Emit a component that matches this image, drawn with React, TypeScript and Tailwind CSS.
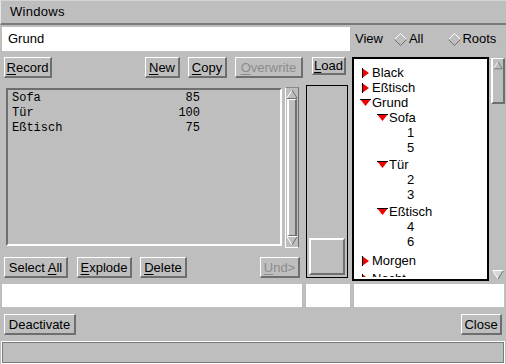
import React from 'react';

type BtnProps = {
  w: string;
  h?: string;
  disabled?: boolean;
  children: React.ReactNode;
};

function Btn({ w, h = 'h-[21px]', disabled, children }: BtnProps) {
  return (
    <div
      className={`${w} ${h} shrink-0 flex items-center justify-center border-t border-l border-white border-r-2 border-b-2 border-r-[#6e6e6e] border-b-[#6e6e6e] text-[13px] leading-none whitespace-pre ${
        disabled ? 'text-[#8c8c8c]' : 'text-black'
      }`}
    >
      <span>{children}</span>
    </div>
  );
}

function U({ children }: { children: React.ReactNode }) {
  return <span className="underline underline-offset-2">{children}</span>;
}

function Diamond() {
  return (
    <svg width="13" height="13" viewBox="0 0 13 13" className="shrink-0">
      <polyline points="0.5,6.5 6.5,0.5 12.5,6.5" fill="none" stroke="#ffffff" strokeWidth="1" />
      <polyline points="0.5,6.5 6.5,12.5 12.5,6.5" fill="none" stroke="#6e6e6e" strokeWidth="1" />
    </svg>
  );
}

function TriRight() {
  return (
    <svg width="7" height="10" viewBox="0 0 7 10">
      <polygon points="0,0 7,5 0,10" fill="#f00000" />
      <line x1="0.5" y1="0" x2="0.5" y2="10" stroke="#000" />
    </svg>
  );
}

function TriDown() {
  return (
    <svg width="11" height="7" viewBox="0 0 11 7">
      <polygon points="0,0 11,0 5.5,7" fill="#f00000" />
      <line x1="0" y1="0.5" x2="11" y2="0.5" stroke="#000" />
    </svg>
  );
}

function ArrowUp() {
  return (
    <svg width="12" height="10" viewBox="0 0 12 10">
      <polygon points="6,1 11,9 1,9" fill="#bebebe" />
      <line x1="6" y1="1" x2="1" y2="9" stroke="#ffffff" />
      <line x1="6" y1="1" x2="11" y2="9" stroke="#6e6e6e" />
      <line x1="1" y1="9.5" x2="11" y2="9.5" stroke="#6e6e6e" />
    </svg>
  );
}

function ArrowDown({ flat }: { flat?: boolean }) {
  return (
    <svg width="12" height="10" viewBox="0 0 12 10">
      <polygon points="1,1 11,1 6,9" fill={flat ? '#d6d6d6' : '#bebebe'} />
      <line x1="1" y1="0.5" x2="11" y2="0.5" stroke="#ffffff" />
      <line x1="1" y1="1" x2="6" y2="9" stroke="#ffffff" />
      <line x1="11" y1="1" x2="6" y2="9" stroke="#6e6e6e" />
    </svg>
  );
}

const rows = [
  { name: 'Sofa', qty: 85 },
  { name: 'Tür', qty: 100 },
  { name: 'Eßtisch', qty: 75 },
];

type Node = { label: string; level: 0 | 1 | 2; open?: boolean; leaf?: boolean; gap?: string };

const tree: Node[] = [
  { label: 'Black', level: 0 },
  { label: 'Eßtisch', level: 0 },
  { label: 'Grund', level: 0, open: true },
  { label: 'Sofa', level: 1, open: true },
  { label: '1', level: 2, leaf: true },
  { label: '5', level: 2, leaf: true },
  { label: 'Tür', level: 1, open: true, gap: 'mt-[2px]' },
  { label: '2', level: 2, leaf: true },
  { label: '3', level: 2, leaf: true },
  { label: 'Eßtisch', level: 1, open: true, gap: 'mt-[2px]' },
  { label: '4', level: 2, leaf: true },
  { label: '6', level: 2, leaf: true },
  { label: 'Morgen', level: 0, gap: 'mt-[4px]' },
  { label: 'Nacht', level: 0, gap: 'mt-[3px]' },
];

function TreeRow({ node }: { node: Node }) {
  const pad = node.level === 0 ? 'pl-[6px]' : node.level === 1 ? 'pl-[23px]' : 'pl-[53px]';
  return (
    <div className={`h-[15px] flex items-center ${pad} ${node.gap ?? ''}`}>
      {!node.leaf && (
        <div className="w-[12px] h-[15px] flex items-center justify-start shrink-0">
          {node.open ? <TriDown /> : <span className="pl-[2px] flex"><TriRight /></span>}
        </div>
      )}
      <span>{node.label}</span>
    </div>
  );
}

export default function App() {
  return (
    <div className="w-[506px] h-[364px] bg-[#bebebe] flex flex-col overflow-hidden font-['Liberation_Sans',Arial,sans-serif] text-[13px] text-black">
      {/* title */}
      <div className="h-[25px] shrink-0 flex items-center pl-[9px] border-t border-l border-t-[#d4d4d4] border-l-[#e6e6e6] border-b-2 border-b-[#7a7a7a] tracking-[0.3px]">
        Windows
      </div>

      {/* name + view */}
      <div className="mt-[2px] h-[24px] shrink-0 flex items-center">
        <div className="ml-[2px] w-[348px] h-[24px] bg-white flex items-center pl-[6px]">Grund</div>
        <span className="ml-[5px]">View</span>
        <span className="ml-[11px] flex"><Diamond /></span>
        <span className="ml-[2px]">All</span>
        <span className="ml-[25px] flex"><Diamond /></span>
        <span className="ml-[1px]">Roots</span>
      </div>

      {/* main */}
      <div className="mt-[6px] h-[224px] shrink-0 flex">
        {/* left column */}
        <div className="ml-[4px] w-[299px] flex flex-col">
          <div className="flex">
            <Btn w="w-[48px]"><U>R</U>ecord</Btn>
            <div className="ml-[93px]"><Btn w="w-[35px]"><U>N</U>ew</Btn></div>
            <div className="ml-[8px]"><Btn w="w-[39px]"><U>C</U>opy</Btn></div>
            <div className="ml-[8px]"><Btn w="w-[68px]" disabled><U>O</U>verwrite</Btn></div>
          </div>

          <div className="mt-[10px] flex items-start">
            <div className="ml-[2px] w-[276px] h-[158px] border-2 border-t-[#6e6e6e] border-l-[#6e6e6e] border-b-white border-r-white font-['Liberation_Mono',monospace] text-[12px]">
              {rows.map((r) => (
                <div key={r.name} className="h-[15px] flex items-center pl-[4px]">
                  <span className="w-[150px]">{r.name}</span>
                  <span className="w-[38px] text-right">{r.qty}</span>
                </div>
              ))}
            </div>
            <div className="ml-[3px] -mt-[1px] w-[14px] h-[161px] flex flex-col border border-t-[#8a8a8a] border-l-[#ffffff] border-r-[#6e6e6e] border-b-[#ffffff]">
              <div className="h-[11px] flex justify-center items-end"><ArrowUp /></div>
              <div className="flex-1 mx-[1px] border-l-2 border-t border-white border-r-2 border-b border-r-[#6e6e6e] border-b-[#6e6e6e]" />
              <div className="h-[11px] flex justify-center items-start"><ArrowDown /></div>
            </div>
          </div>

          <div className="mt-[9px] flex">
            <Btn w="w-[64px]">Select <U>A</U>ll</Btn>
            <div className="ml-[9px]"><Btn w="w-[55px]"><U>E</U>xplode</Btn></div>
            <div className="ml-[8px]"><Btn w="w-[47px]"><U>D</U>elete</Btn></div>
            <div className="ml-[73px]"><Btn w="w-[40px]" disabled><U>U</U>nd&gt;</Btn></div>
          </div>
        </div>

        {/* middle column */}
        <div className="ml-[3px] w-[44px] flex flex-col">
          <div className="ml-[6px]"><Btn w="w-[34px]" h="h-[18px]"><U>L</U>oad</Btn></div>
          <div className="mt-[10px] w-[42px] h-[193px] border border-black flex flex-col justify-end p-[2px]">
            <div className="h-[37px] border-t-2 border-l-2 border-white border-r-2 border-b-2 border-r-[#6e6e6e] border-b-[#6e6e6e]" />
          </div>
        </div>

        {/* tree */}
        <div className="ml-[2px] w-[137px] h-[224px] border-2 border-black bg-white flex flex-col pb-[2px]">
          <div className="flex-1 overflow-hidden pt-[6px]">
            {tree.map((n, i) => (
              <TreeRow key={i} node={n} />
            ))}
          </div>
        </div>
        <div className="ml-[2px] mt-[1px] w-[14px] h-[222px] flex flex-col">
          <div className="h-[46px] flex flex-col border-l-2 border-t border-white border-r-2 border-b-2 border-r-[#6e6e6e] border-b-[#6e6e6e]">
            <div className="h-[9px] flex justify-center items-start pt-[1px]"><ArrowUp /></div>
          </div>
          <div className="flex-1" />
          <div className="h-[10px] flex justify-center"><ArrowDown flat /></div>
        </div>
      </div>

      {/* status fields */}
      <div className="mt-[3px] h-[23px] shrink-0 flex">
        <div className="ml-[2px] w-[300px] bg-white" />
        <div className="ml-[4px] w-[44px] bg-white" />
        <div className="ml-[4px] w-[150px] bg-white" />
      </div>

      {/* action row */}
      <div className="mt-[7px] shrink-0 flex">
        <div className="ml-[4px]"><Btn w="w-[72px]">Deactivate</Btn></div>
        <div className="ml-auto mr-[4px]"><Btn w="w-[41px]">Close</Btn></div>
      </div>

      {/* message bar */}
      <div className="mt-[6px] mx-[1px] h-[23px] shrink-0 border border-white">
        <div className="h-full border border-[#7a7a7a]" />
      </div>
    </div>
  );
}
